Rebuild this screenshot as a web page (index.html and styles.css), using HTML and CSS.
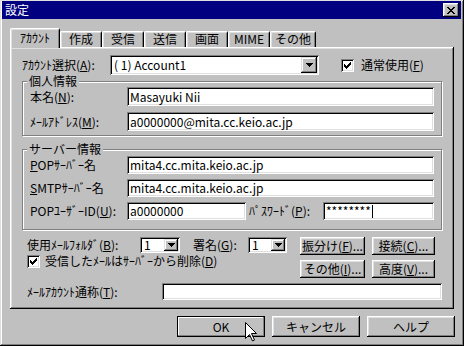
FILE: index.html
```html
<!DOCTYPE html>
<html lang="ja">
<head>
    <meta charset="UTF-8">
    <title>設定</title>
    <link rel="stylesheet" href="styles.css">
</head>
<body>
<div class="window">
    <div class="titlebar">
        <span class="title">設定</span>
        <span class="close">
            <svg width="8" height="7" viewBox="0 0 8 7" shape-rendering="crispEdges"><path d="M0 0h2v1h-2zM6 0h2v1h-2zM1 1h2v1h-2zM5 1h2v1h-2zM2 2h4v1h-4zM3 3h2v1h-2zM2 4h4v1h-4zM1 5h2v1h-2zM5 5h2v1h-2zM0 6h2v1h-2zM6 6h2v1h-2z"/></svg>
        </span>
    </div>

    <div class="content">
        <div class="tabs">
            <div class="tab active">ｱｶｳﾝﾄ</div>
            <div class="tab">作成</div>
            <div class="tab">受信</div>
            <div class="tab">送信</div>
            <div class="tab">画面</div>
            <div class="tab">MIME</div>
            <div class="tab tab-wide">その他</div>
        </div>

        <div class="panel">
            <div class="top-row">
                <span class="lbl lbl-account">ｱｶｳﾝﾄ選択(<u>A</u>):</span>
                <div class="combo combo-account">
                    <span class="combo-text">( 1) Account1</span>
                    <span class="drop"><svg width="7" height="4" viewBox="0 0 7 4" shape-rendering="crispEdges"><path d="M0 0h7v1h-1v1h-1v1h-1v1h-1v-1h-1v-1h-1v-1h-1z"/></svg></span>
                </div>
                <div class="check-label check-default">
                    <span class="check"><svg width="7" height="7" viewBox="0 0 7 7" shape-rendering="crispEdges"><path d="M6 0h1v1h-1zM5 1h2v1h-2zM0 2h1v1h-1zM4 2h3v1h-3zM0 3h2v1h-2zM3 3h3v1h-3zM0 4h5v1h-5zM1 5h3v1h-3zM2 6h1v1h-1z"/></svg></span>
                    <span>通常使用(<u>F</u>)</span>
                </div>
            </div>

            <div class="group group-personal">
                <div class="group-title">個人情報</div>
                <div class="field-row">
                    <span class="lbl lbl-field">本名(<u>N</u>):</span>
                    <div class="field">Masayuki Nii</div>
                </div>
                <div class="field-row">
                    <span class="lbl lbl-field">ﾒｰﾙｱﾄﾞﾚｽ(<u>M</u>):</span>
                    <div class="field">a0000000@mita.cc.keio.ac.jp</div>
                </div>
            </div>

            <div class="group group-server">
                <div class="group-title">サーバー情報</div>
                <div class="field-row">
                    <span class="lbl lbl-field"><u>P</u>OPｻｰﾊﾞｰ名</span>
                    <div class="field">mita4.cc.mita.keio.ac.jp</div>
                </div>
                <div class="field-row">
                    <span class="lbl lbl-field"><u>S</u>MTPｻｰﾊﾞｰ名</span>
                    <div class="field">mita4.cc.mita.keio.ac.jp</div>
                </div>
                <div class="field-row">
                    <span class="lbl lbl-field">POPﾕｰｻﾞｰID(<u>U</u>):</span>
                    <div class="field field-user">a0000000</div>
                    <span class="lbl lbl-pass">ﾊﾟｽﾜｰﾄﾞ(<u>P</u>):</span>
                    <div class="field">********<span class="caret"></span></div>
                </div>
            </div>

            <div class="bottom">
                <div class="bottom-left">
                    <div class="folder-row">
                        <span class="lbl lbl-folder">使用ﾒｰﾙﾌｫﾙﾀﾞ(<u>B</u>):</span>
                        <div class="combo combo-small">
                            <span class="combo-text">1</span>
                            <span class="drop"><svg width="7" height="4" viewBox="0 0 7 4" shape-rendering="crispEdges"><path d="M0 0h7v1h-1v1h-1v1h-1v1h-1v-1h-1v-1h-1v-1h-1z"/></svg></span>
                        </div>
                        <span class="lbl lbl-sign">署名(<u>G</u>):</span>
                        <div class="combo combo-small">
                            <span class="combo-text">1</span>
                            <span class="drop"><svg width="7" height="4" viewBox="0 0 7 4" shape-rendering="crispEdges"><path d="M0 0h7v1h-1v1h-1v1h-1v1h-1v-1h-1v-1h-1v-1h-1z"/></svg></span>
                        </div>
                    </div>
                    <div class="check-label delete-row">
                        <span class="check"><svg width="7" height="7" viewBox="0 0 7 7" shape-rendering="crispEdges"><path d="M6 0h1v1h-1zM5 1h2v1h-2zM0 2h1v1h-1zM4 2h3v1h-3zM0 3h2v1h-2zM3 3h3v1h-3zM0 4h5v1h-5zM1 5h3v1h-3zM2 6h1v1h-1z"/></svg></span>
                        <span>受信したﾒｰﾙはｻｰﾊﾞｰから削除(<u>D</u>)</span>
                    </div>
                </div>
                <div class="side-buttons">
                    <button class="btn btn-small">振分け(<u>F</u>)...</button>
                    <button class="btn btn-small">接続(<u>C</u>)...</button>
                    <button class="btn btn-small">その他(<u>I</u>)...</button>
                    <button class="btn btn-small">高度(<u>V</u>)...</button>
                </div>
            </div>

            <div class="alias-row">
                <span class="lbl lbl-alias">ﾒｰﾙｱｶｳﾝﾄ通称(<u>T</u>):</span>
                <div class="field field-alias"></div>
            </div>
        </div>

        <div class="dialog-buttons">
            <button class="btn btn-dialog btn-default">OK</button>
            <button class="btn btn-dialog">キャンセル</button>
            <button class="btn btn-dialog">ヘルプ</button>
        </div>
    </div>

    <svg class="cursor" width="13" height="20" viewBox="0 0 13 20">
        <path d="M0.5 0.5V16.5L4.5 12.5L7.5 19L9.5 18L6.5 11.5H11.5Z" fill="#fff" stroke="#000" stroke-width="1"/>
    </svg>
</div>
</body>
</html>
```

FILE: styles.css
```css
* {
    box-sizing: border-box;
}

body {
    margin: 0;
    font-family: "Noto Sans CJK JP", "Noto Sans", sans-serif;
    font-size: 12px;
    line-height: 14px;
    color: #000;
    background: #c0c0c0;
}

u {
    text-underline-offset: 1px;
}

.window {
    position: relative;
    width: 464px;
    height: 346px;
    padding: 1px 3px 0 2px;
    background: #c0c0c0;
    box-shadow: inset -1px -1px #000, inset 1px 1px #dfdfdf, inset -2px -2px #808080, inset 2px 2px #fff;
    overflow: hidden;
}

/* barre de titre */
.titlebar {
    display: flex;
    align-items: center;
    justify-content: space-between;
    height: 18px;
    padding: 0 2px 0 3px;
    background: #000080;
    color: #fff;
}

.close {
    display: flex;
    align-items: center;
    justify-content: center;
    width: 16px;
    height: 14px;
    background: #c0c0c0;
    box-shadow: inset -1px -1px #000, inset 1px 1px #fff, inset -2px -2px #808080, inset 2px 2px #dfdfdf;
}

.content {
    padding: 9px 7px 0 8px;
}

/* onglets */
.tabs {
    display: flex;
    align-items: flex-end;
    height: 19px;
}

.tab {
    width: 42px;
    height: 16px;
    text-align: center;
    line-height: 14px;
    border: 1px solid;
    border-color: #fff #000 transparent #fff;
    border-bottom: 0;
    border-radius: 2px 2px 0 0;
    box-shadow: inset 1px 1px #dfdfdf, inset -1px 0 #808080;
    background: #c0c0c0;
}

.tab.active {
    position: relative;
    z-index: 1;
    width: 50px;
    height: 20px;
    margin-bottom: -1px;
    padding-top: 2px;
}

.tab-wide {
    width: 46px;
}

.panel {
    height: 262px;
    padding: 8px 12px 0;
    box-shadow: inset -1px -1px #000, inset 1px 1px #fff, inset -2px -2px #808080, inset 2px 2px #dfdfdf;
}

.lbl {
    flex: none;
    white-space: nowrap;
}

/* controles */
.top-row {
    display: flex;
    align-items: center;
    height: 20px;
}

.lbl-account {
    width: 88px;
}

.combo {
    display: flex;
    align-items: center;
    padding: 2px;
    background: #fff;
    box-shadow: inset 1px 1px #808080, inset -1px -1px #fff, inset 2px 2px #000, inset -2px -2px #dfdfdf;
}

.combo-account {
    width: 209px;
    height: 20px;
}

.combo-small {
    width: 40px;
    height: 16px;
}

.combo-text {
    flex: 1;
    padding-left: 2px;
    white-space: nowrap;
}

.drop {
    display: flex;
    align-items: center;
    justify-content: center;
    width: 16px;
    height: 16px;
    background: #c0c0c0;
    box-shadow: inset -1px -1px #000, inset 1px 1px #dfdfdf, inset -2px -2px #808080, inset 2px 2px #fff;
}

.combo-small .drop {
    width: 14px;
    height: 12px;
}

.check-label {
    display: flex;
    align-items: center;
    white-space: nowrap;
}

.check-default {
    margin-left: 22px;
    gap: 7px;
}

.check {
    display: flex;
    align-items: center;
    justify-content: center;
    width: 13px;
    height: 13px;
    background: #fff;
    box-shadow: inset 1px 1px #808080, inset -1px -1px #fff, inset 2px 2px #000, inset -2px -2px #dfdfdf;
}

/* cadres */
.group {
    border: 1px solid #808080;
    box-shadow: inset 1px 1px #fff, 1px 1px #fff;
    padding: 0 7px 4px;
}

.group-personal {
    margin-top: 6px;
}

.group-server {
    margin-top: 13px;
    padding-bottom: 9px;
}

.group-title {
    width: fit-content;
    margin: -8px 0 -1px -3px;
    padding: 0 2px;
    background: #c0c0c0;
}

.field-row {
    display: flex;
    align-items: center;
    height: 19px;
    margin-top: 6px;
}

.group-title + .field-row {
    margin-top: 0;
}

.group-server .field-row {
    height: 18px;
    margin-top: 5px;
}

.group-server .group-title + .field-row {
    margin-top: 1px;
}

.lbl-field {
    width: 97px;
}

.field {
    display: flex;
    align-items: center;
    flex: 1;
    height: 100%;
    padding: 0 3px;
    background: #fff;
    white-space: nowrap;
    box-shadow: inset 1px 1px #808080, inset -1px -1px #fff, inset 2px 2px #000, inset -2px -2px #dfdfdf;
}

.field-user {
    flex: none;
    width: 119px;
}

.lbl-pass {
    width: 74px;
    margin-left: 3px;
}

.caret {
    width: 1px;
    height: 13px;
    margin-left: 1px;
    background: #000;
}

/* bas du panneau */
.bottom {
    display: flex;
    margin-top: 7px;
    padding-left: 5px;
}

.bottom-left {
    width: 273px;
    line-height: 12px;
}

.folder-row {
    display: flex;
    align-items: center;
    height: 16px;
}

.lbl-folder {
    width: 113px;
}

.lbl-sign {
    width: 55px;
    margin-left: 13px;
}

.folder-row .combo-small:last-child {
    width: 39px;
}

.delete-row {
    gap: 5px;
    height: 14px;
    margin-top: 1px;
}

.side-buttons {
    display: grid;
    grid-template-columns: 65px 63px;
    column-gap: 7px;
    row-gap: 5px;
}

.btn {
    padding: 0;
    border: 0;
    font: inherit;
    color: #000;
    background: #c0c0c0;
    white-space: nowrap;
    box-shadow: inset -1px -1px #000, inset 1px 1px #fff, inset -2px -2px #808080, inset 2px 2px #dfdfdf;
}

.btn-small {
    height: 18px;
}

.alias-row {
    display: flex;
    align-items: center;
    height: 17px;
    margin-top: 5px;
    padding-left: 5px;
}

.lbl-alias {
    width: 135px;
}

.field-alias {
    flex: none;
    width: 280px;
}

/* boutons du dialogue */
.dialog-buttons {
    display: flex;
    justify-content: flex-end;
    gap: 7px;
    margin: 7px -1px 0 0;
}

.btn-dialog {
    width: 88px;
    height: 21px;
}

.btn-default {
    border: 1px solid #000;
    box-shadow: inset -1px -1px #808080, inset 1px 1px #fff;
}

.cursor {
    position: absolute;
    left: 245px;
    top: 322px;
}
```
